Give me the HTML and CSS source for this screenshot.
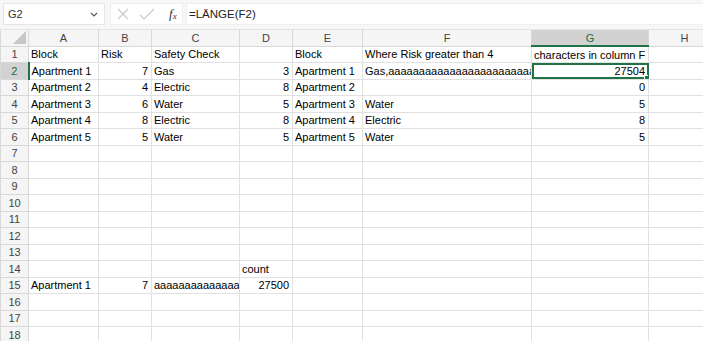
FILE: index.html
```html
<!DOCTYPE html>
<html lang="de">
<head>
  <meta charset="UTF-8" />
  <title>Sheet</title>
  <link rel="stylesheet" href="styles.css">
</head>
<body>

<!-- formula bar -->
<div class="bar">
  <div class="namebox">
    <span>G2</span>
    <svg width="8" height="5" viewBox="0 0 8 5"><path d="M1 1 L4 4 L7 1" fill="none" stroke="#555" stroke-width="1.1"/></svg>
  </div>
  <div class="fxbox">
    <svg width="14" height="14" viewBox="0 0 14 14"><path d="M2 2 L12 12 M12 2 L2 12" stroke="#c8c8c8" stroke-width="1.1"/></svg>
    <svg width="16" height="14" viewBox="0 0 16 14"><path d="M1 8 L5 12 L15 2" fill="none" stroke="#c8c8c8" stroke-width="1.1"/></svg>
    <span class="fx">f<sub>x</sub></span>
  </div>
  <div class="formula">=LÄNGE(F2)</div>
</div>

<table class="sheet">
  <colgroup>
    <col class="c-rh"><col class="c-a"><col class="c-b"><col class="c-c"><col class="c-d">
    <col class="c-e"><col class="c-f"><col class="c-g"><col class="c-h">
  </colgroup>
  <tr class="colhead">
    <th class="corner"><span class="tri"></span></th>
    <th>A</th><th>B</th><th>C</th><th>D</th><th>E</th><th>F</th><th class="selcol">G</th><th>H</th>
  </tr>
  <tr><th>1</th><td>Block</td><td>Risk</td><td>Safety Check</td><td></td><td>Block</td><td>Where Risk greater than 4</td><td>characters in column F</td><td></td></tr>
  <tr><th class="selrow">2</th><td>Apartment 1</td><td class="n">7</td><td>Gas</td><td class="n">3</td><td>Apartment 1</td><td class="clip"><div>Gas,aaaaaaaaaaaaaaaaaaaaaaaaaaaaaaaaaaaa</div></td><td class="n active">27504<span class="handle"></span></td><td></td></tr>
  <tr><th>3</th><td>Apartment 2</td><td class="n">4</td><td>Electric</td><td class="n">8</td><td>Apartment 2</td><td></td><td class="n">0</td><td></td></tr>
  <tr><th>4</th><td>Apartment 3</td><td class="n">6</td><td>Water</td><td class="n">5</td><td>Apartment 3</td><td>Water</td><td class="n">5</td><td></td></tr>
  <tr><th>5</th><td>Apartment 4</td><td class="n">8</td><td>Electric</td><td class="n">8</td><td>Apartment 4</td><td>Electric</td><td class="n">8</td><td></td></tr>
  <tr><th>6</th><td>Apartment 5</td><td class="n">5</td><td>Water</td><td class="n">5</td><td>Apartment 5</td><td>Water</td><td class="n">5</td><td></td></tr>
  <tr><th>7</th><td></td><td></td><td></td><td></td><td></td><td></td><td></td><td></td></tr>
  <tr><th>8</th><td></td><td></td><td></td><td></td><td></td><td></td><td></td><td></td></tr>
  <tr><th>9</th><td></td><td></td><td></td><td></td><td></td><td></td><td></td><td></td></tr>
  <tr><th>10</th><td></td><td></td><td></td><td></td><td></td><td></td><td></td><td></td></tr>
  <tr><th>11</th><td></td><td></td><td></td><td></td><td></td><td></td><td></td><td></td></tr>
  <tr><th>12</th><td></td><td></td><td></td><td></td><td></td><td></td><td></td><td></td></tr>
  <tr><th>13</th><td></td><td></td><td></td><td></td><td></td><td></td><td></td><td></td></tr>
  <tr><th>14</th><td></td><td></td><td></td><td>count</td><td></td><td></td><td></td><td></td></tr>
  <tr><th>15</th><td>Apartment 1</td><td class="n">7</td><td class="clip"><div>aaaaaaaaaaaaaaaaaaaaaaaaaa</div></td><td class="n">27500</td><td></td><td></td><td></td><td></td></tr>
  <tr><th>16</th><td></td><td></td><td></td><td></td><td></td><td></td><td></td><td></td></tr>
  <tr><th>17</th><td></td><td></td><td></td><td></td><td></td><td></td><td></td><td></td></tr>
  <tr><th>18</th><td></td><td></td><td></td><td></td><td></td><td></td><td></td><td></td></tr>
</table>

</body>
</html>
```

FILE: styles.css
```css
body {
  margin: 0;
  font-family: "Liberation Sans", Arial, sans-serif;
  font-size: 11px;
  color: #000;
  background: #fff;
  overflow: hidden;
}

/* formula bar */
.bar {
  height: 29px;
  box-sizing: border-box;
  padding: 3px 0 4px 3px;
  display: flex;
  gap: 5px;
  background: #f7f7f7;
}
.namebox {
  width: 102px;
  box-sizing: border-box;
  background: #fff;
  border: 1px solid #e6e6e6;
  display: flex;
  align-items: center;
  justify-content: space-between;
  padding: 0 6px 0 4px;
  color: #333;
}
.fxbox {
  width: 73px;
  box-sizing: border-box;
  background: #fff;
  border: 1px solid #efefef;
  display: flex;
  align-items: center;
  gap: 9px;
  padding-left: 5px;
}
.fx {
  font-family: "Liberation Serif", serif;
  font-style: italic;
  font-size: 13px;
  color: #333;
  margin-left: 5px;
}
.fx sub {
  font-size: 9px;
  vertical-align: -1px;
}
.formula {
  flex: 1;
  margin-left: -2px;
  background: #fff;
  border: 1px solid #efefef;
  border-right: none;
  display: flex;
  align-items: center;
  padding-left: 2px;
  font-size: 11.5px;
  color: #222;
}

/* grid */
.sheet {
  border-collapse: collapse;
  table-layout: fixed;
  width: 720px;
}
.c-rh { width: 28px; }
.c-a { width: 70px; }
.c-b { width: 53px; }
.c-c { width: 88px; }
.c-d { width: 53px; }
.c-e { width: 70px; }
.c-f { width: 169px; }
.c-g { width: 117px; }
.c-h { width: 72px; }

.sheet tr {
  height: 16.5px;
}
.sheet td, .sheet th {
  padding: 0 3px 0 2px;
  border: 1px solid #e1e1e1;
  white-space: nowrap;
  overflow: hidden;
  line-height: 14px;
  font-weight: normal;
}
.sheet th {
  padding: 0;
  background: #f5f5f5;
  color: #444;
  text-align: center;
  border-color: #d8d8d8;
}
.colhead th {
  border-top-color: #e6e6e6;
}
.corner {
  position: relative;
}
.tri {
  position: absolute;
  right: 2px;
  bottom: 2px;
  width: 0;
  height: 0;
  border-left: 13px solid transparent;
  border-bottom: 13px solid #c6c6c6;
}
.selcol {
  background: #d2d2d2 !important;
  color: #1e6b41 !important;
  border-bottom: 2px solid #217346 !important;
}
.selrow {
  background: #d2d2d2 !important;
  color: #1e6b41 !important;
  border-right: 2px solid #217346 !important;
}
.n {
  text-align: right;
}
.sheet .clip {
  padding-right: 0;
}
.clip div {
  overflow: hidden;
}
.active {
  position: relative;
  outline: 2px solid #217346;
  outline-offset: -2px;
  padding-right: 4px;
}
.handle {
  position: absolute;
  right: -3px;
  bottom: -3px;
  width: 5px;
  height: 5px;
  background: #217346;
  border: 1px solid #fff;
}
```
